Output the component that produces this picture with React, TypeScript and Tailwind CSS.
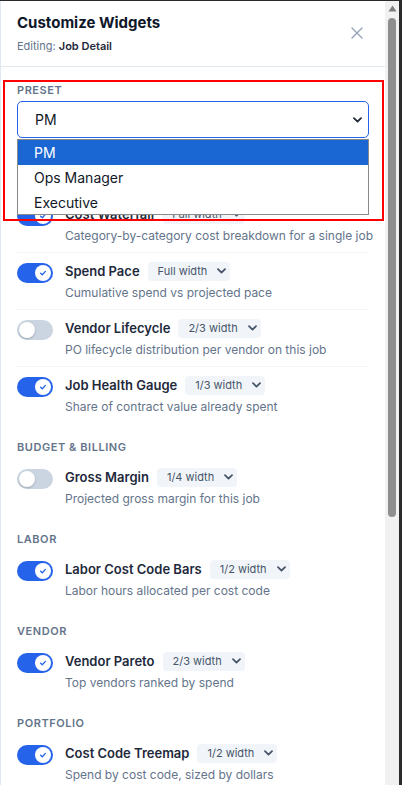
import React from "react";

type Row = { title: string; size: string; desc: string; on: boolean };
type Section = { label: string; rows: Row[] };

const sections: Section[] = [
  {
    label: "",
    rows: [
      { title: "Cost Waterfall", size: "Full width", desc: "Category-by-category cost breakdown for a single job", on: true },
      { title: "Spend Pace", size: "Full width", desc: "Cumulative spend vs projected pace", on: true },
      { title: "Vendor Lifecycle", size: "2/3 width", desc: "PO lifecycle distribution per vendor on this job", on: false },
      { title: "Job Health Gauge", size: "1/3 width", desc: "Share of contract value already spent", on: true },
    ],
  },
  {
    label: "Budget & Billing",
    rows: [{ title: "Gross Margin", size: "1/4 width", desc: "Projected gross margin for this job", on: false }],
  },
  {
    label: "Labor",
    rows: [{ title: "Labor Cost Code Bars", size: "1/2 width", desc: "Labor hours allocated per cost code", on: true }],
  },
  {
    label: "Vendor",
    rows: [{ title: "Vendor Pareto", size: "2/3 width", desc: "Top vendors ranked by spend", on: true }],
  },
  {
    label: "Portfolio",
    rows: [
      { title: "Cost Code Treemap", size: "1/2 width", desc: "Spend by cost code, sized by dollars", on: true },
    ],
  },
];

function Toggle({ on }: { on: boolean }) {
  if (on) {
    return (
      <div className="mt-[2px] flex h-5 w-9 shrink-0 items-center justify-end rounded-full bg-[#2563eb] p-[2px]">
        <div className="flex h-4 w-4 items-center justify-center rounded-full bg-white">
          <svg width="10" height="10" viewBox="0 0 10 10" fill="none">
            <path d="M2.6 5.2 4.3 6.8 7.4 3.4" stroke="#2563eb" strokeWidth="1.3" strokeLinecap="round" strokeLinejoin="round" />
          </svg>
        </div>
      </div>
    );
  }
  return (
    <div className="mt-[2px] flex h-5 w-9 shrink-0 items-center rounded-full bg-[#cbd5e1] p-[2px]">
      <div className="h-4 w-4 rounded-full bg-white shadow-[0_1px_2px_rgba(15,23,42,0.25)]" />
    </div>
  );
}

function Chevron({ className }: { className?: string }) {
  return (
    <svg className={className} width="9" height="6" viewBox="0 0 9 6" fill="none">
      <path d="M1 1.2 4.5 4.6 8 1.2" stroke="currentColor" strokeWidth="1.8" strokeLinecap="round" strokeLinejoin="round" />
    </svg>
  );
}

function WidgetRow({ row, last }: { row: Row; last: boolean }) {
  return (
    <div className={"flex gap-3 pt-2 pb-[7px] " + (last ? "" : "border-b border-[#f1f5f9]")}>
      <Toggle on={row.on} />
      <div className="min-w-0 flex-1">
        <div className="flex h-5 items-center gap-2">
          <span className="whitespace-nowrap text-[13px] font-semibold leading-5 text-[#1e293b]">{row.title}</span>
          <span className="flex h-[19px] items-center gap-[10px] whitespace-nowrap rounded-[4px] bg-[#f1f5f9] pl-[10px] pr-[4px] text-[11px] text-[#475569]">
            {row.size}
            <Chevron className="text-[#475569]" />
          </span>
        </div>
        <div className="mt-[3px] whitespace-nowrap text-[12px] leading-[18px] text-[#64748b]">{row.desc}</div>
      </div>
    </div>
  );
}

export default function App() {
  return (
    <div className="h-[785px] w-[402px] overflow-hidden bg-[#2b2b2b] pt-px pr-[3px]" style={{ fontFamily: "Inter, 'Noto Sans', sans-serif" }}>
      <div className="flex h-[784px] w-[399px] border-l border-[#e2e8f0] bg-white">
        <div className="relative min-w-0 flex-1 overflow-hidden">
          {/* Header */}
          <div className="flex items-center justify-between border-b border-[#e2e8f0] px-4 pt-[12px] pb-[13px]">
            <div>
              <div className="text-[15px] font-bold leading-5 text-[#0f172a]">Customize Widgets</div>
              <div className="mt-[6px] text-[11px] leading-[14px] text-[#64748b]">
                Editing: <span className="font-semibold text-[#1e293b]">Job Detail</span>
              </div>
            </div>
            <button className="flex h-6 w-6 items-center justify-center">
              <svg width="12" height="12" viewBox="0 0 12 12" fill="none">
                <path d="M1 1 11 11M11 1 1 11" stroke="#94a3b8" strokeWidth="1.4" strokeLinecap="round" />
              </svg>
            </button>
          </div>

          {/* Body */}
          <div className="px-4 pt-[16px]">
            <div className="mb-1 text-[11px] font-semibold uppercase leading-[14px] tracking-[0.05em] text-[#64748b]">Preset</div>
            <div className="flex h-[37px] items-center justify-between rounded-[5px] border-[1.5px] border-[#2563eb] pl-[17px] pr-[6px] text-[14px] text-[#111827]">
              <span>PM</span>
              <Chevron className="text-[#1f2937]" />
            </div>

            {sections.map((s, si) => (
              <div key={si} className={si === 0 ? "mt-[58px]" : "mt-[17px]"}>
                {s.label && (
                  <div className="mb-[5px] text-[11px] font-semibold uppercase leading-[14px] tracking-[0.05em] text-[#64748b]">{s.label}</div>
                )}
                {s.rows.map((r, ri) => (
                  <WidgetRow key={r.title} row={r} last={ri === s.rows.length - 1} />
                ))}
              </div>
            ))}
          </div>

          {/* Open preset listbox */}
          <div className="absolute left-[16px] top-[138px] w-[352px] border border-[#8a8a8a] bg-white text-[14px] text-[#111827]">
            <div className="flex h-[25px] items-center bg-[#1a66d2] pl-4 text-white">PM</div>
            <div className="flex h-[25px] items-center pl-4">Ops Manager</div>
            <div className="flex h-[24px] items-center pl-4">Executive</div>
          </div>

          {/* Highlight annotation */}
          <div className="pointer-events-none absolute left-[2px] top-[79px] h-[141px] w-[381px] border-2 border-[#ff0000]" />
        </div>

        {/* Scrollbar */}
        <div className="flex w-[14px] shrink-0 flex-col items-center bg-[#f1f1f1]">
          <svg className="mt-[4px]" width="9" height="7" viewBox="0 0 9 7">
            <path d="M4.5 0.5 8.5 6.5H0.5Z" fill="#7c7c7c" />
          </svg>
          <div className="mt-[6px] h-[499px] w-[8px] rounded-full bg-[#8e8e8e]" />
        </div>
      </div>
    </div>
  );
}
